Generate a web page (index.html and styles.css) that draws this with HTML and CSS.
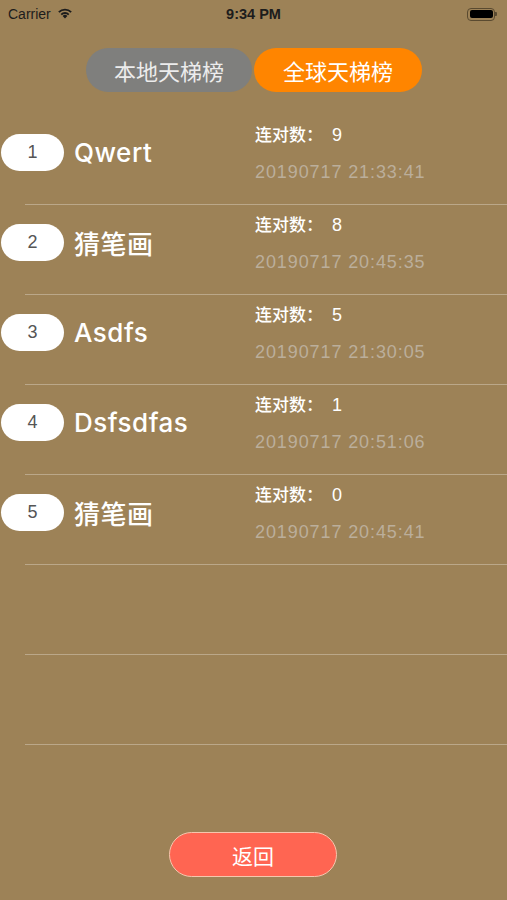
FILE: index.html
```html
<!DOCTYPE html>
<html lang="zh">
<head>
<meta charset="utf-8">
<title>天梯榜</title>
<link rel="stylesheet" href="styles.css">
</head>
<body>
<div class="screen">
  <div class="status">
    <div class="status-left">
      <span class="carrier">Carrier</span>
      <svg class="wifi" width="16" height="12" viewBox="0 0 16 12">
        <path d="M8 11.5 L5.6 8.9 A3.4 3.4 0 0 1 10.4 8.9 Z" fill="#1c1c1c"/>
        <path d="M3.6 6.9 A6.2 6.2 0 0 1 12.4 6.9 L11.1 8.2 A4.4 4.4 0 0 0 4.9 8.2 Z" fill="#1c1c1c"/>
        <path d="M1.2 4.5 A9.6 9.6 0 0 1 14.8 4.5 L13.5 5.8 A7.8 7.8 0 0 0 2.5 5.8 Z" fill="#1c1c1c"/>
      </svg>
    </div>
    <span class="time">9:34 PM</span>
    <div class="status-right">
      <div class="battery"><div class="battery-fill"></div></div>
      <div class="battery-nub"></div>
    </div>
  </div>

  <div class="tabs">
    <button class="tab tab-local">本地天梯榜</button>
    <button class="tab tab-global">全球天梯榜</button>
  </div>

  <ul class="list">
    <li class="row">
      <div class="player"><span class="badge">1</span><span class="name">Qwert</span></div>
      <div class="stats"><div class="streak">连对数：<span class="num">9</span></div><div class="date">20190717 21:33:41</div></div>
    </li>
    <li class="row">
      <div class="player"><span class="badge">2</span><span class="name">猜笔画</span></div>
      <div class="stats"><div class="streak">连对数：<span class="num">8</span></div><div class="date">20190717 20:45:35</div></div>
    </li>
    <li class="row">
      <div class="player"><span class="badge">3</span><span class="name">Asdfs</span></div>
      <div class="stats"><div class="streak">连对数：<span class="num">5</span></div><div class="date">20190717 21:30:05</div></div>
    </li>
    <li class="row">
      <div class="player"><span class="badge">4</span><span class="name">Dsfsdfas</span></div>
      <div class="stats"><div class="streak">连对数：<span class="num">1</span></div><div class="date">20190717 20:51:06</div></div>
    </li>
    <li class="row">
      <div class="player"><span class="badge">5</span><span class="name">猜笔画</span></div>
      <div class="stats"><div class="streak">连对数：<span class="num">0</span></div><div class="date">20190717 20:45:41</div></div>
    </li>
    <li class="row empty"></li>
    <li class="row empty"></li>
  </ul>

  <div class="footer">
    <button class="back">返回</button>
  </div>
</div>
</body>
</html>
```

FILE: styles.css
```css
* { box-sizing: border-box; }
html, body { margin: 0; padding: 0; }
body {
  background: #9d8257;
  font-family: "Liberation Sans", "Noto Sans CJK SC", sans-serif;
}
.screen {
  width: 507px;
  height: 900px;
  display: flex;
  flex-direction: column;
  overflow: hidden;
}
.status {
  height: 28px;
  display: flex;
  align-items: center;
  justify-content: space-between;
  padding: 0 8px;
  color: #1c1c1c;
}
.status-left { display: flex; align-items: center; gap: 6px; width: 120px; }
.carrier { font-size: 14px; }
.wifi { display: block; margin-top: -2px; }
.time { font-size: 14.5px; font-weight: 700; }
.status-right { width: 120px; display: flex; justify-content: flex-end; align-items: center; padding-right: 2px; }
.battery {
  width: 28px; height: 13px;
  border: 1.5px solid #5a4a30;
  border-radius: 4px;
  padding: 1.5px;
}
.battery-fill { width: 100%; height: 100%; background: #000; border-radius: 2px; }
.battery-nub { width: 2px; height: 4px; background: #5a4a30; border-radius: 0 1px 1px 0; }

.tabs {
  display: flex;
  justify-content: center;
  gap: 2px;
  margin-top: 20px;
  padding-left: 1px;
}
.tab {
  height: 44px;
  border: none;
  border-radius: 22px;
  color: #fff;
  font-family: "Noto Sans CJK SC", sans-serif;
  font-size: 22px;
  font-weight: 400;
  padding: 0;
}
.tab-local { width: 166px; background: #7f7f7d; color: #ececec; }
.tab-global { width: 168px; background: #ff8500; }

.list {
  list-style: none;
  margin: 23px 0 0;
  padding: 0;
}
.row {
  height: 90px;
  display: flex;
  background: linear-gradient(rgba(255,255,255,0.3), rgba(255,255,255,0.3)) no-repeat 25px 100% / calc(100% - 25px) 1px;
}
.player {
  width: 255px;
  display: flex;
  align-items: center;
  gap: 10px;
  padding-top: 19px;
  align-self: flex-start;
}
.badge {
  margin-left: 1px;
  width: 63px;
  height: 37px;
  border-radius: 19px;
  background: #fff;
  color: #555;
  font-size: 18px;
  display: flex;
  align-items: center;
  justify-content: center;
}
.name {
  color: #fff;
  font-family: "Inter", "Noto Sans CJK SC", sans-serif;
  font-size: 26px;
  font-weight: 500;
  letter-spacing: 0.5px;
}
.stats {
  padding-top: 7px;
  display: flex;
  flex-direction: column;
  gap: 13px;
}
.streak {
  color: #fff;
  font-family: "Noto Sans CJK SC", sans-serif;
  font-size: 17px;
  font-weight: 500;
  line-height: 24px;
}
.num {
  font-family: "Liberation Sans", sans-serif;
  font-size: 18px;
  margin-left: 9px;
}
.date {
  color: #bbae9b;
  font-size: 18px;
  line-height: 24px;
  letter-spacing: 0.9px;
}
.footer {
  margin-top: auto;
  display: flex;
  justify-content: center;
  padding-bottom: 23px;
  padding-right: 1px;
}
.back {
  width: 168px;
  height: 45px;
  border-radius: 23px;
  background: #ff6552;
  border: 1.5px solid #f6c6ad;
  color: #fff;
  font-family: "Noto Sans CJK SC", sans-serif;
  font-size: 21px;
  font-weight: 400;
  padding: 0;
}
```
